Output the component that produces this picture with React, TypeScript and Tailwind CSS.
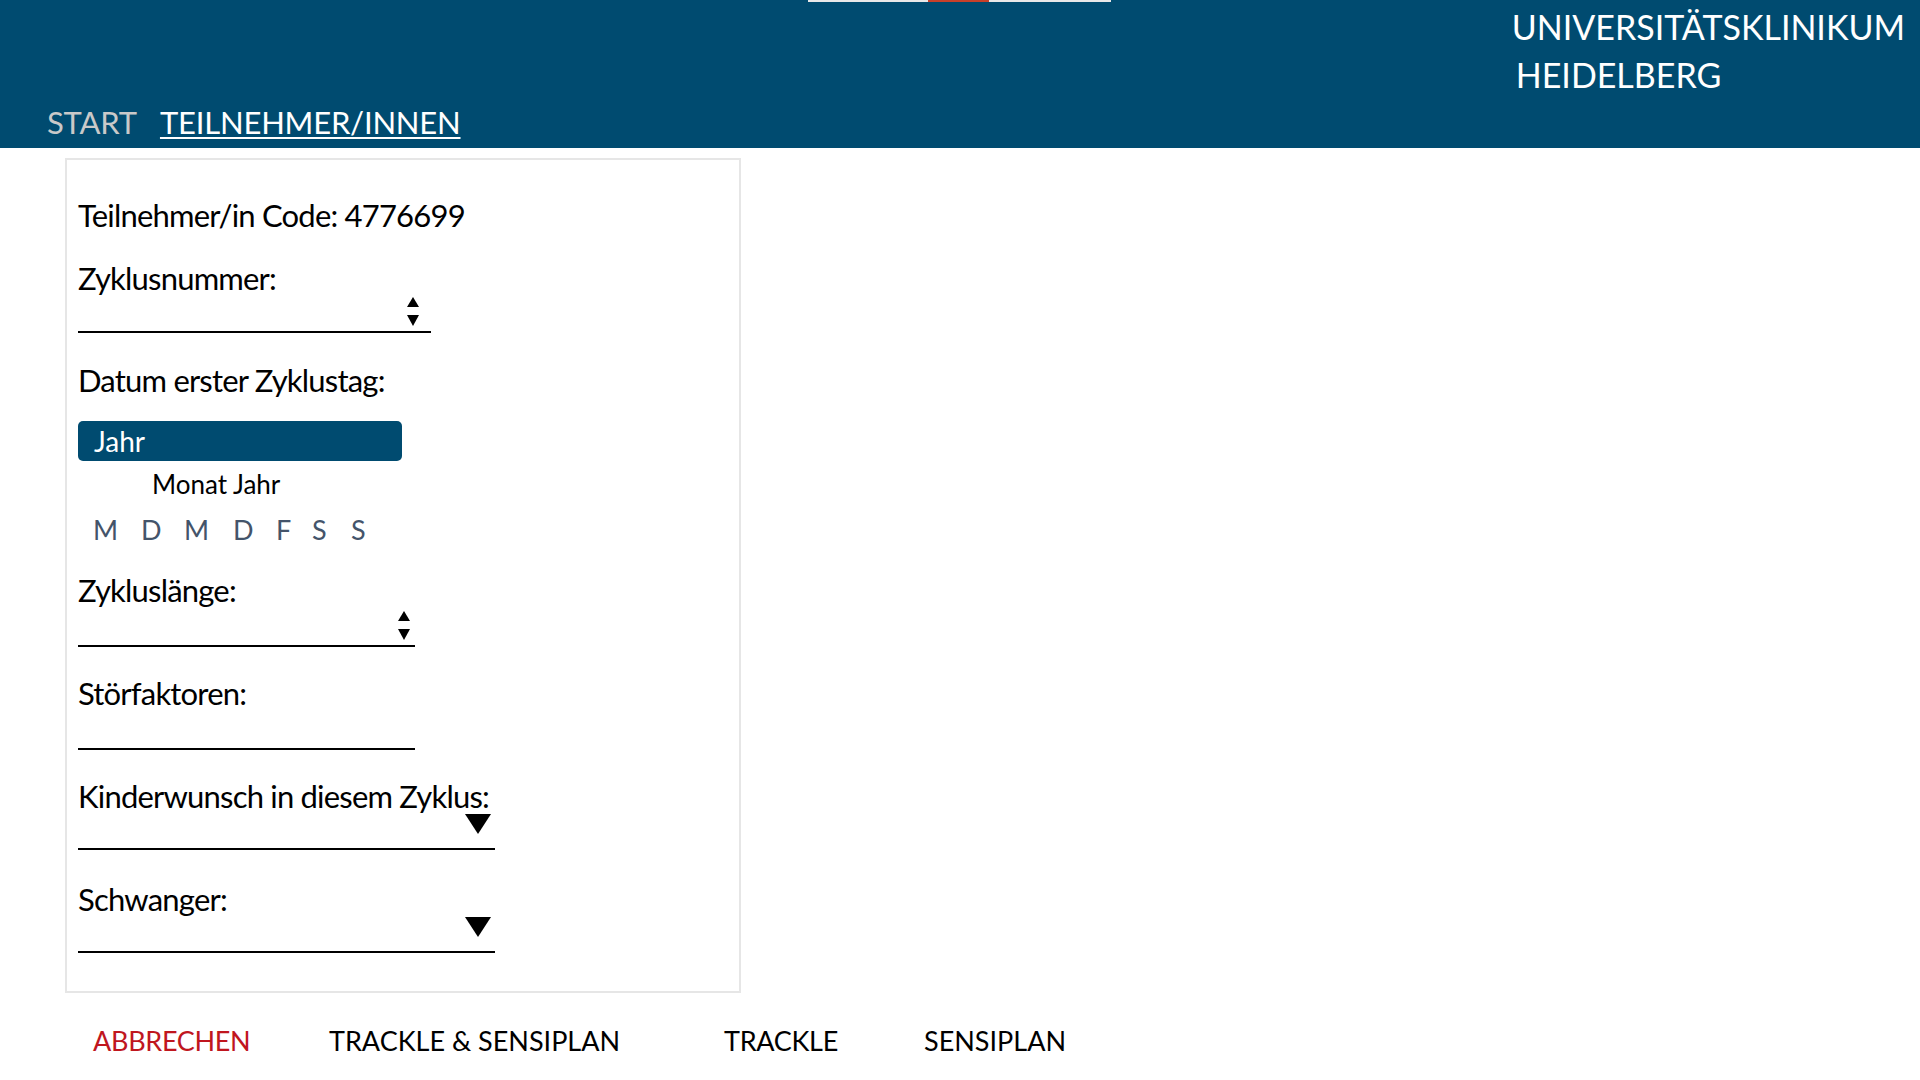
import { FC } from 'react';

const font = { fontFamily: 'Lato, "Open Sans", sans-serif' };

const Spinner: FC = () => (
  <svg width="12" height="30" viewBox="0 0 12 30" className="mb-1">
    <polygon points="6,0 12,10 0,10" fill="#000" />
    <polygon points="0,18 12,18 6,29" fill="#000" />
  </svg>
);

const Caret: FC = () => (
  <svg width="26" height="20" viewBox="0 0 26 20" className="mb-[14px] mr-[4px]">
    <polygon points="0,0 26,0 13,20" fill="#000" />
  </svg>
);

const Label: FC<{ text: string; className?: string }> = ({ text, className }) => (
  <div className={`text-[31px] leading-[40px] tracking-[-0.8px] text-black ${className ?? ''}`}>{text}</div>
);

const Field: FC<{ width: string; height?: string; children?: React.ReactNode }> = ({
  width,
  height = 'h-[37px]',
  children,
}) => (
  <div className={`${width} ${height} border-b-2 border-black flex items-end justify-end`}>{children}</div>
);

const days = ['M', 'D', 'M', 'D', 'F', 'S', 'S'];
const dayX = ['w-[48px]', 'w-[43px]', 'w-[49px]', 'w-[43px]', 'w-[36px]', 'w-[39px]', 'w-[30px]'];

const App: FC = () => {
  return (
    <div className="w-[1920px] h-[1080px] bg-white overflow-hidden" style={font}>
      <header className="relative h-[148px] bg-[#004b70] flex justify-between">
        <div className="absolute top-0 left-[808px] w-[303px] h-[2px] bg-[#e8e8e8]" />
        <div className="absolute top-0 left-[928px] w-[61px] h-[2px] bg-[#c8402a]" />
        <nav className="flex items-end pb-[6px] pl-[47px] gap-[23px] text-[31px] leading-[40px] tracking-[-0.2px]">
          <span className="text-[#c9c9c9]">START</span>
          <span className="text-white underline decoration-2 underline-offset-[3px]">TEILNEHMER/INNEN</span>
        </nav>
        <div className="pt-[3px] pr-[15px] text-white text-[34px] leading-[48px]">
          <div>UNIVERSITÄTSKLINIKUM</div>
          <div className="pl-[4px]">HEIDELBERG</div>
        </div>
      </header>

      <main className="pl-[65px] pt-[10px]">
        <section className="w-[676px] h-[835px] border-2 border-[#e6e6e6] pl-[11px] pt-[35px] flex flex-col">
          <Label text="Teilnehmer/in Code: 4776699" />
          <Label text="Zyklusnummer:" className="mt-[23px]" />
          <Field width="w-[353px]" height="h-[35px]">
            <div className="mr-[12px]"><Spinner /></div>
          </Field>
          <Label text="Datum erster Zyklustag:" className="mt-[27px]" />
          <button className="mt-[21px] w-[324px] h-[40px] rounded-[5px] bg-[#004b70] text-white text-left pl-[16px] text-[28px] leading-[40px]">
            Jahr
          </button>
          <div className="pl-[74px] mt-[6px] text-[26px] leading-[34px] text-black">Monat Jahr</div>
          <div className="flex pl-[15px] mt-[12px] text-[27px] leading-[34px] text-[#44546a]">
            {days.map((d, i) => (
              <span key={`day_${i}`} className={dayX[i]}>{d}</span>
            ))}
          </div>
          <Label text="Zykluslänge:" className="mt-[23px]" />
          <Field width="w-[337px]">
            <div className="mr-[5px]"><Spinner /></div>
          </Field>
          <Label text="Störfaktoren:" className="mt-[26px]" />
          <Field width="w-[337px]" />
          <Label text="Kinderwunsch in diesem Zyklus:" className="mt-[26px]" />
          <Field width="w-[417px]" height="h-[34px]">
            <Caret />
          </Field>
          <Label text="Schwanger:" className="mt-[29px]" />
          <Field width="w-[417px]" height="h-[34px]">
            <Caret />
          </Field>
        </section>

        <div className="flex items-center h-[86px] pt-[9px] text-[27px] leading-[40px]">
          <button className="ml-[28px] w-[236px] text-left text-[#c0161e] tracking-[-0.3px]">ABBRECHEN</button>
          <button className="w-[395px] text-left text-black">TRACKLE &amp; SENSIPLAN</button>
          <button className="w-[200px] text-left text-black tracking-[-0.3px]">TRACKLE</button>
          <button className="text-left text-black">SENSIPLAN</button>
        </div>
      </main>
    </div>
  );
};

export default App;
